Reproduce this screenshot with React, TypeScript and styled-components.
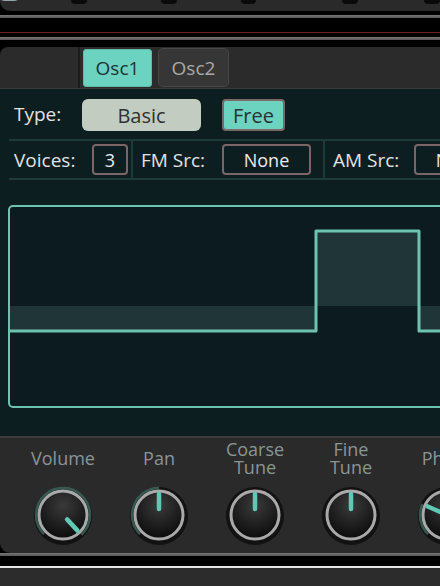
import React from "react";
import styled, { createGlobalStyle } from "styled-components";

const GlobalStyle = createGlobalStyle`
  html, body {
    margin: 0;
    padding: 0;
    background: #000;
    overflow: hidden;
  }
  body {
    font-family: "Open Sans", "Liberation Sans", sans-serif;
  }
`;

const TEAL = "#6cd3c0";
const LINE = "#6cc4b0";

type KnobProps = {
  label: string[];
  angle: number;
  arcFrom?: number;
};

const knobs: KnobProps[] = [
  { label: ["Volume"], angle: 137, arcFrom: -135 },
  { label: ["Pan"], angle: 0, arcFrom: -135 },
  { label: ["Coarse", "Tune"], angle: 0 },
  { label: ["Fine", "Tune"], angle: 0 },
  { label: ["Phase"], angle: -66, arcFrom: -135 },
];

// top edge stubs of the knobs from the section above
const stubs = [52, 74, 64, 86, 66];

const polar = (cx: number, cy: number, r: number, deg: number) => {
  const rad = ((deg - 90) * Math.PI) / 180;
  return [cx + r * Math.cos(rad), cy + r * Math.sin(rad)];
};

const Knob = ({ angle, arcFrom }: { angle: number; arcFrom?: number }) => {
  const [x1, y1] = polar(32, 32, 6, angle);
  const [x2, y2] = polar(32, 32, 21, angle);
  let arc = null;
  if (arcFrom !== undefined && arcFrom < angle) {
    const [ax, ay] = polar(32, 32, 27, arcFrom);
    const [bx, by] = polar(32, 32, 27, angle);
    const large = angle - arcFrom > 180 ? 1 : 0;
    arc = (
      <path
        d={`M${ax} ${ay} A27 27 0 ${large} 1 ${bx} ${by}`}
        fill="none"
        stroke="rgba(108,196,176,0.4)"
        strokeWidth={2.5}
      />
    );
  }
  return (
    <svg width="64" height="64" viewBox="0 0 64 64">
      <defs>
        <radialGradient id="kbody" cx="50%" cy="30%" r="70%">
          <stop offset="0%" stopColor="#3a3a3a" />
          <stop offset="100%" stopColor="#0b0b0b" />
        </radialGradient>
      </defs>
      <circle cx="32" cy="33" r="29" fill="#121212" />
      <circle cx="32" cy="32" r="24" fill="url(#kbody)" />
      <circle cx="32" cy="32" r="24" fill="none" stroke="#a9a9a9" strokeWidth={3} />
      {arc}
      <line
        x1={x1}
        y1={y1}
        x2={x2}
        y2={y2}
        stroke="#5fc9b5"
        strokeWidth={4.5}
        strokeLinecap="round"
      />
    </svg>
  );
};

const App = () => {
  return (
    <>
      <GlobalStyle />
      <Frame>
        <Header>
          <TopPanel>
            <SmallBox />
            {stubs.map((m, i) => (
              <Stub key={i} offset={m} />
            ))}
          </TopPanel>
          <Rail top={4} />
          <RedLine />
          <Rail top={4} />
        </Header>

        <TabBar>
          <TabLead />
          <Tab active>Osc1</Tab>
          <Tab>Osc2</Tab>
        </TabBar>

        <Main>
          <TypeRow>
            <TypeLabel>Type:</TypeLabel>
            <BasicButton>Basic</BasicButton>
            <FreeButton>Free</FreeButton>
          </TypeRow>

          <ParamRow>
            <Cell width={124} pad={5}>
              <ParamLabel width={78}>Voices:</ParamLabel>
              <ValueBox width={36}>3</ValueBox>
            </Cell>
            <Cell width={192} pad={8}>
              <ParamLabel width={81}>FM Src:</ParamLabel>
              <ValueBox width={89}>None</ValueBox>
            </Cell>
            <Cell width={200} pad={8}>
              <ParamLabel width={81}>AM Src:</ParamLabel>
              <ValueBox width={89}>None</ValueBox>
            </Cell>
          </ParamRow>

          <Scope>
            <svg width="470" height="199" viewBox="0 0 470 199">
              <rect x="0" y="99" width="306" height="25" fill="#1f3537" />
              <rect x="306" y="24" width="103" height="75" fill="#1f3537" />
              <rect x="409" y="99" width="61" height="25" fill="#1f3537" />
              <path
                d="M0 124 H306 V24 H409 V124 H470"
                fill="none"
                stroke={LINE}
                strokeWidth={3}
                strokeLinejoin="round"
              />
            </svg>
          </Scope>
        </Main>

        <KnobPanel>
          {knobs.map((k) => (
            <KnobCell key={k.label.join(" ")}>
              <KnobLabel>
                {k.label.map((l) => (
                  <span key={l}>{l}</span>
                ))}
              </KnobLabel>
              <Knob angle={k.angle} arcFrom={k.arcFrom} />
            </KnobCell>
          ))}
        </KnobPanel>

        <Footer>
          <Rail top={0} />
          <WhiteLine />
          <BottomPanel />
        </Footer>
      </Frame>
    </>
  );
};

export default App;

const Frame = styled.div`
  width: 440px;
  height: 586px;
  overflow: hidden;
  display: flex;
  flex-direction: column;
  background: #000;
`;

const Header = styled.div`
  height: 46px;
  flex-shrink: 0;
  display: flex;
  flex-direction: column;
`;

const TopPanel = styled.div`
  height: 11px;
  background: #2a2a2a;
  border-bottom-left-radius: 10px;
  display: flex;
  align-items: flex-start;
  position: relative;
  overflow: hidden;
`;

const SmallBox = styled.div`
  width: 28px;
  height: 3px;
  margin-top: -4px;
  background: #163a3a;
  border: 1px solid #8fa6a6;
  border-radius: 0 0 4px 4px;
`;

const Stub = styled.div<{ offset: number }>`
  width: 26px;
  height: 4px;
  margin-left: ${(p) => p.offset}px;
  background: #0a0a0a;
  border-radius: 0 0 13px 13px;
`;

const Rail = styled.div<{ top: number }>`
  height: 3px;
  margin-top: ${(p) => p.top}px;
  background: linear-gradient(#777, #555);
  flex-shrink: 0;
`;

const RedLine = styled.div`
  height: 1px;
  margin-top: 14px;
  background: #6e1c1c;
`;

const TabBar = styled.div`
  height: 42px;
  flex-shrink: 0;
  margin-top: 1px;
  background: #2b2b2b;
  border-top-left-radius: 8px;
  border-bottom: 1px solid #3b3b3b;
  box-sizing: border-box;
  display: flex;
  align-items: center;
`;

const TabLead = styled.div`
  width: 80px;
  height: 100%;
  border-right: 2px solid #1b1b1b;
  box-sizing: border-box;
`;

const Tab = styled.div<{ active?: boolean }>`
  width: ${(p) => (p.active ? 69 : 71)}px;
  height: ${(p) => (p.active ? 38 : 39)}px;
  margin-left: ${(p) => (p.active ? 3 : 6)}px;
  box-sizing: border-box;
  display: flex;
  align-items: center;
  justify-content: center;
  font-size: 19px;
  border-radius: ${(p) => (p.active ? 3 : 5)}px;
  background: ${(p) => (p.active ? TEAL : "#363636")};
  color: ${(p) => (p.active ? "#1d3331" : "#a9a9a9")};
  border: 1px solid ${(p) => (p.active ? "#5fbcaa" : "#474747")};
`;

const Main = styled.div`
  height: 347px;
  flex-shrink: 0;
  background: #0d1e21;
  display: flex;
  flex-direction: column;
`;

const TypeRow = styled.div`
  height: 50px;
  display: flex;
  align-items: center;
  padding-left: 14px;
  padding-top: 2px;
  box-sizing: border-box;
`;

const TypeLabel = styled.span`
  width: 68px;
  color: #e2e2e2;
  font-size: 19px;
  margin-top: -3px;
`;

const BasicButton = styled.div`
  width: 119px;
  height: 32px;
  border-radius: 6px;
  background: #c3ccc1;
  color: #2e3232;
  font-size: 20px;
  display: flex;
  align-items: center;
  justify-content: center;
`;

const FreeButton = styled.div`
  width: 63px;
  height: 32px;
  margin-left: 21px;
  box-sizing: border-box;
  border: 2px solid #7d6868;
  border-radius: 4px;
  background: ${TEAL};
  color: #2a3232;
  font-size: 20px;
  display: flex;
  align-items: center;
  justify-content: center;
`;

const ParamRow = styled.div`
  height: 41px;
  margin-left: 9px;
  box-sizing: border-box;
  border-top: 2px solid #1f3a3b;
  border-bottom: 2px solid #1f3a3b;
  display: flex;
  flex-shrink: 0;
`;

const Cell = styled.div<{ width: number; pad: number }>`
  width: ${(p) => p.width}px;
  flex-shrink: 0;
  padding-left: ${(p) => p.pad}px;
  box-sizing: border-box;
  border-right: 2px solid #1f3a3b;
  display: flex;
  align-items: center;
`;

const ParamLabel = styled.span<{ width: number }>`
  width: ${(p) => p.width}px;
  flex-shrink: 0;
  color: #e2e2e2;
  font-size: 19px;
`;

const ValueBox = styled.div<{ width: number }>`
  width: ${(p) => p.width}px;
  height: 31px;
  flex-shrink: 0;
  box-sizing: border-box;
  border: 2px solid #7b6566;
  border-radius: 4px;
  color: #ececec;
  font-size: 18px;
  display: flex;
  align-items: center;
  justify-content: center;
`;

const Scope = styled.div`
  width: 474px;
  height: 203px;
  margin-top: 25px;
  margin-left: 8px;
  box-sizing: border-box;
  border: 2px solid ${LINE};
  border-radius: 5px;
  background: #0b1b1f;
  overflow: hidden;
  flex-shrink: 0;
  svg {
    display: block;
  }
`;

const KnobPanel = styled.div`
  height: 117px;
  flex-shrink: 0;
  box-sizing: border-box;
  background: #2a2a2a;
  border-top: 2px solid #3b3b3b;
  border-bottom-left-radius: 10px;
  padding-left: 15px;
  display: grid;
  grid-template-columns: repeat(5, 96px);
`;

const KnobCell = styled.div`
  display: flex;
  flex-direction: column;
  align-items: center;
  padding-top: 2px;
  gap: 7px;
`;

const KnobLabel = styled.div`
  height: 36px;
  display: flex;
  flex-direction: column;
  align-items: center;
  justify-content: center;
  color: #8a9597;
  font-size: 18px;
  line-height: 18px;
  white-space: nowrap;
`;

const Footer = styled.div`
  flex: 1;
  display: flex;
  flex-direction: column;
`;

const WhiteLine = styled.div`
  height: 2px;
  margin-top: 10px;
  background: #e4e4e4;
`;

const BottomPanel = styled.div`
  flex: 1;
  background: #2c2c2c;
`;
